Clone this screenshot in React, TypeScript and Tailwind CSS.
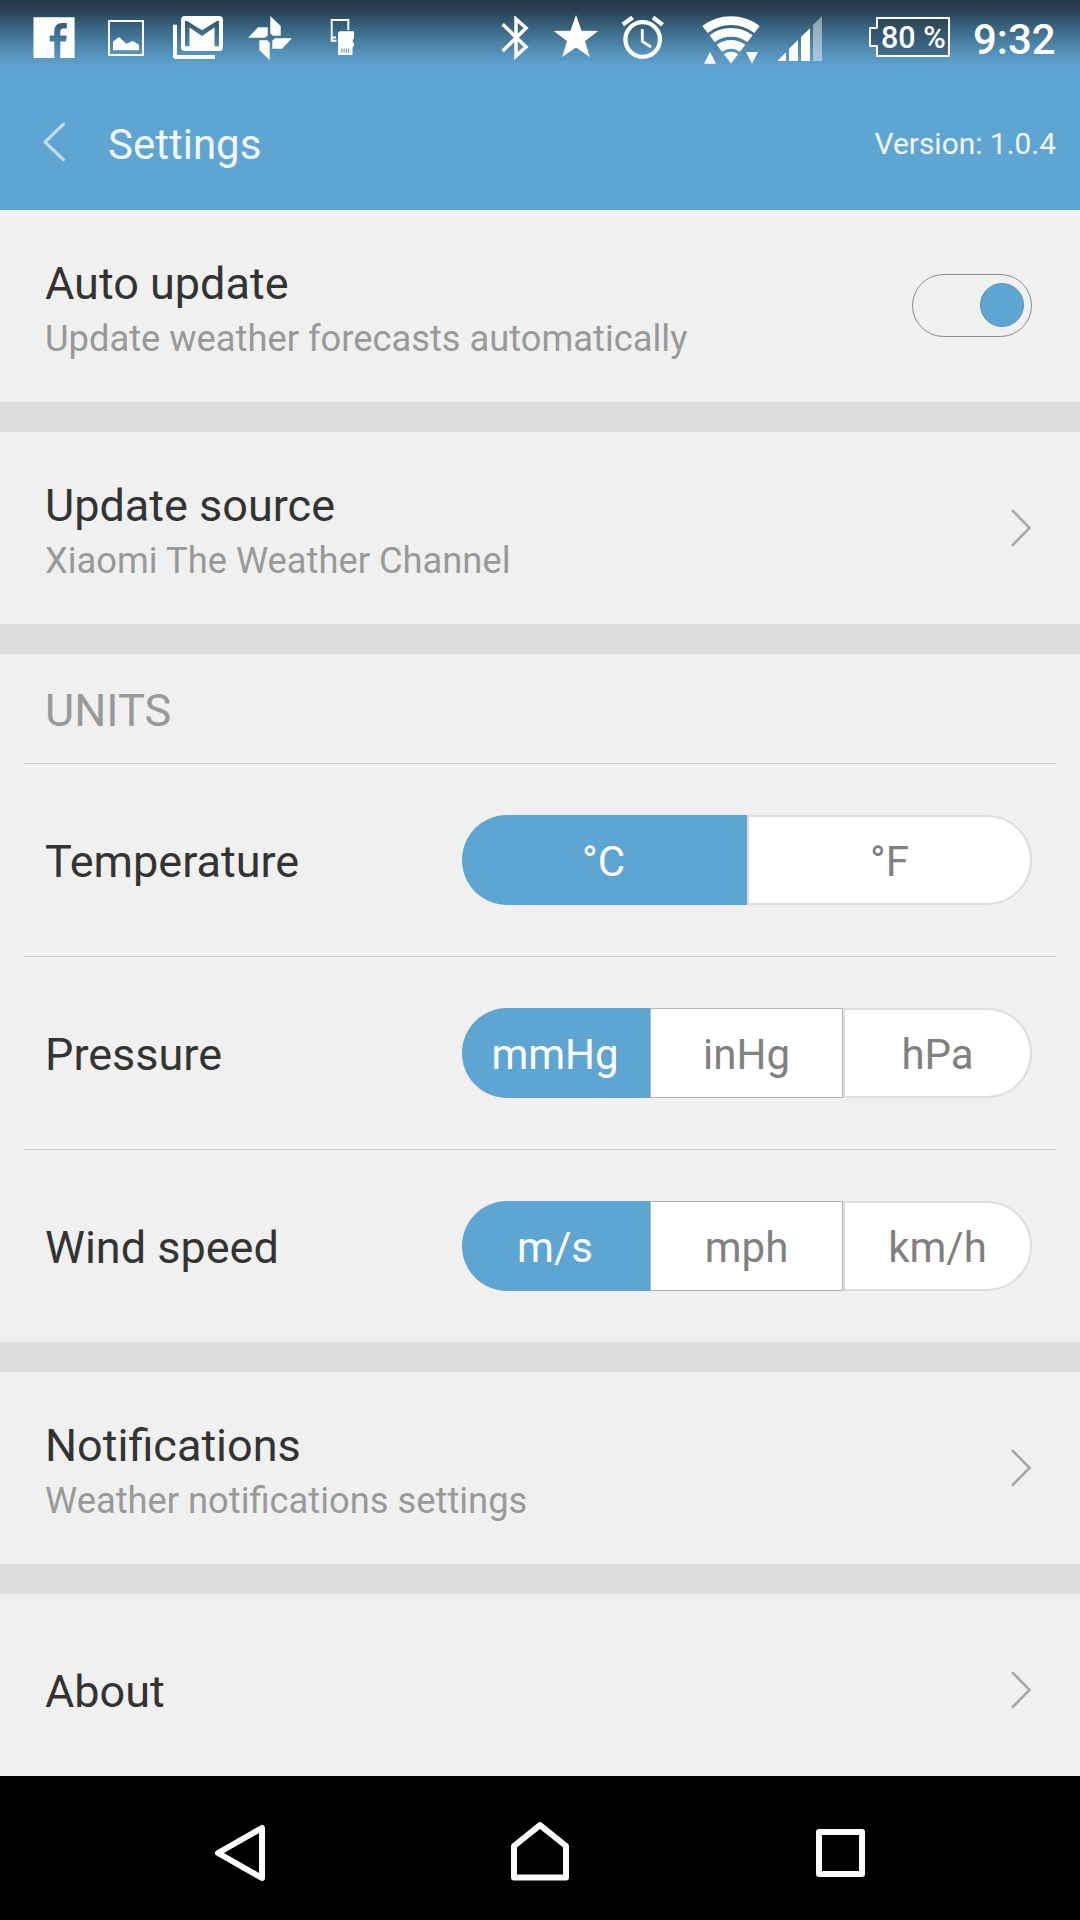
import { useState } from 'react';
import type { ReactNode } from 'react';

interface SegmentedControlProps {
  options: string[];
  value: string;
  onChange: (value: string) => void;
}

interface SettingRowProps {
  title: string;
  subtitle?: string;
  children?: ReactNode;
}

const PETAL = 'M270.3 16L280.7 26V35.7H272.8L270.3 33.2Z';

function ChevronRight() {
  return (
    <svg className="mr-px mb-px h-[38px] w-5" viewBox="0 0 20 38" fill="none" stroke="#a6a6a6" strokeWidth="2.6" strokeLinecap="round">
      <path d="M1.8 1.9 18.6 18.9 1.8 35.9" />
    </svg>
  );
}

function StatusBar() {
  return (
    <div className="flex h-[75px] bg-[linear-gradient(#253a49_0px,#294354_10px,#335a73_22px,#447899_38px,#5592bb_53px,#5da1ce_65px,#5fa5d2_75px)] pl-[33px] text-white">
      <svg className="mt-[17px] h-[42px] w-[42px]" viewBox="33 17 42 42" fill="currentColor">
        <path fillRule="evenodd" d="M33.5 17.3H74.6V58H60.3V41.6H66L66.8 35.6H60.3V31.5Q60.3 28.6 63.3 28.6H66.8V22.9H62.3Q54.3 23.2 54.3 31V35.6H49.7V41.6H54.3V58H33.5Z" />
      </svg>
      <svg className="mt-5 ml-[33px] h-9 w-9" viewBox="108 20 36 36" fill="currentColor">
        <rect x="109" y="21" width="34" height="34" fill="none" stroke="currentColor" strokeWidth="2" />
        <path d="M113 50.3V41.7L119 37L126.3 43.8L133 41L139 45V50.3Z" />
      </svg>
      <svg className="mt-4 ml-[29px] h-[43px] w-[50px]" viewBox="173 16 50 43" fill="currentColor">
        <path d="M173 24.7H177V55H215V59H175.5Q173 59 173 56.5Z" />
        <path fillRule="evenodd" d="M185 16H219Q223 16 223 20V47Q223 51 219 51H185Q181 51 181 47V20Q181 16 185 16ZM185 21V46.3H189.5V27.5L202 36L214.5 27.5V46.3H219V21H217L202 30.3L187 21Z" />
      </svg>
      <svg className="mt-4 ml-[25px] h-11 w-11" viewBox="248 16 44 44" fill="currentColor">
        <path d={PETAL} />
        <path d={PETAL} transform="rotate(90 270 38)" />
        <path d={PETAL} transform="rotate(180 270 38)" />
        <path d={PETAL} transform="rotate(270 270 38)" />
      </svg>
      <svg className="mt-[19px] ml-[38px] h-9 w-6" viewBox="330 19 24 36" fill="currentColor">
        <path d="M336.5 40.8H331.7V20H348.3V30M331 37.5H336" fill="none" stroke="currentColor" strokeWidth="1.9" />
        <path d="M339.5 31.3H354V38.5L352.8 40V42L354 43.5V46L352.5 47.5V55H338V33Z" />
        <path d="M341.8 48.5V52.8M344.1 48.5V52.8M346.4 48.5V52.8M348.7 48.5V52.8" stroke="#5089ae" />
      </svg>

      <svg className="mt-4 ml-[147px] h-11 w-7" viewBox="501 16 28 44" fill="none" stroke="currentColor" strokeWidth="3.5">
        <path d="M502.7 24.3L526 47L516 56V19L526 28L502.7 51" />
      </svg>
      <svg className="mt-[15px] ml-6 h-[43px] w-[46px]" viewBox="553 15 46 43" fill="currentColor">
        <path d="M576 15L581.5 30.8L598.3 31L585 41L589.8 57L576 47.4L562.2 57L567 41L553.7 31L570.5 30.8Z" />
      </svg>
      <svg className="mt-4 ml-[22px] h-11 w-11" viewBox="621 16 44 44" fill="none" stroke="currentColor">
        <circle cx="642.7" cy="39.5" r="17.3" strokeWidth="4.2" />
        <path d="M642.3 29V41.3L651 47" strokeWidth="2.8" />
        <path d="M622.8 24.5L632.6 17.5M653 17.5L662.6 24.8" strokeWidth="4.4" />
      </svg>
      <svg className="mt-4 ml-[37px] h-12 w-[58px]" viewBox="702 16 58 48" fill="none" stroke="currentColor" strokeWidth="8.8">
        <path d="M705 29.4A42.9 42.9 0 0 1 757 29.4" />
        <path d="M712.1 38.8A31.1 31.1 0 0 1 749.9 38.8" />
        <path d="M719.4 48.3A19.1 19.1 0 0 1 742.6 48.3" />
        <path d="M723.9 54.2A11.7 11.7 0 0 1 738.1 54.2L731 63.5Z" fill="currentColor" stroke="none" />
        <path d="M704 63.8H716L710 52ZM746 52H758L752 63.8Z" fill="currentColor" stroke="none" />
      </svg>
      <svg className="mt-4 ml-[17px] h-[45px] w-[45px]" viewBox="777 16 45 45" fill="currentColor">
        <path d="M777.3 61L786 52.3V61ZM789 61V48.7L798 40V61ZM801 61V37L810 28.3V61Z" />
        <path d="M813 61V25L822 16V61Z" opacity="0.45" />
      </svg>
      <div className="relative mt-[17px] ml-[47px] h-10 w-[81px]">
        <svg className="h-10 w-[81px]" viewBox="0 0 81 40" fill="none">
          <defs>
            <linearGradient id="charge" x1="0" y1="0" x2="0" y2="1">
              <stop offset="0" stopColor="#2a4454" />
              <stop offset="1" stopColor="#416f8e" />
            </linearGradient>
          </defs>
          <path d="M8 1H80V39H8V29H1V11H8Z" fill="url(#charge)" stroke="#fff" strokeWidth="2" strokeLinejoin="round" />
        </svg>
        <span className="absolute top-px left-[12px] text-[30.5px] leading-[40px] font-medium whitespace-nowrap">80 %</span>
      </div>
      <span className="ml-[23px] pt-[14px] text-[42px] leading-[52px] font-medium">9:32</span>
    </div>
  );
}

function Header() {
  return (
    <header className="flex h-[135px] justify-between bg-[#5fa5d2] pr-6 pl-[43px] text-[#f0f6fc]">
      <div className="flex">
        <svg className="mt-[47px] h-10 w-[22px]" viewBox="0 0 22 40" fill="none" stroke="#bfdbee" strokeWidth="3.2" strokeLinecap="round" strokeLinejoin="round">
          <path d="M20.3 2.3 2 20 20.3 37.7" />
        </svg>
        <h1 className="mt-11 ml-[43px] text-[42px] leading-[52px]">Settings</h1>
      </div>
      <span className="mt-[49px] text-[29.9px] leading-[40px]">Version: 1.0.4</span>
    </header>
  );
}

function SettingRow({ title, subtitle, children }: SettingRowProps) {
  return (
    <div className="flex h-48 shrink-0 items-center justify-between pr-12 pl-[45px]">
      <div className={subtitle ? 'pt-[7px]' : 'pt-1'}>
        <p className="text-[45px] leading-[52px] text-[#333]">{title}</p>
        {subtitle && <p className="mt-[7px] text-[36.3px] leading-[44px] text-[#999]">{subtitle}</p>}
      </div>
      {children}
    </div>
  );
}

function Toggle({ checked, onChange }: { checked: boolean; onChange: (checked: boolean) => void }) {
  return (
    <button
      role="switch"
      aria-checked={checked}
      onClick={() => onChange(!checked)}
      className={`mb-[2px] flex h-[63px] w-[120px] items-center rounded-full border border-[#8a8a8a] px-[7px] ${checked ? 'justify-end' : 'justify-start'}`}
    >
      <span className={`h-11 w-11 rounded-full border ${checked ? 'border-[#5592b9] bg-[#5fa5d2]' : 'border-[#999] bg-[#bbb]'}`} />
    </button>
  );
}

function SegmentedControl({ options, value, onChange }: SegmentedControlProps) {
  const columns = options.length === 2 ? 'grid-cols-[285px_285px]' : 'grid-cols-[188px_193px_189px]';

  return (
    <div className={`grid h-[90px] w-[570px] ${columns}`}>
      {options.map((option, index) => {
        const first = index === 0;
        const last = index === options.length - 1;
        const shape = first ? 'rounded-l-[45px] pr-[2px]' : last ? 'rounded-r-[45px]' : '';
        const border = first || last ? 'border-2 border-[#dddddd]' : 'border border-[#b4b4b4]';
        const color = option === value ? 'bg-[#5fa5d2] text-white' : `bg-white text-[#808080] ${border}`;
        return (
          <button
            key={option}
            onClick={() => onChange(option)}
            className={`flex items-center justify-center pt-[3px] text-[42px] ${shape} ${color}`}
          >
            {option}
          </button>
        );
      })}
    </div>
  );
}

function Divider() {
  return <div className="mx-6 h-px bg-[#cfcfcf]" />;
}

function Gap() {
  return <div className="h-[30px] bg-[#dddddd]" />;
}

function NavigationBar() {
  return (
    <nav className="flex h-36 bg-black pl-[214px]">
      <svg className="mt-[48px] h-[58px] w-[51px]" viewBox="-1 0 51 58" fill="none" stroke="#fff" strokeWidth="6" strokeLinejoin="round">
        <path d="M47 4V54L3 29Z" />
      </svg>
      <svg className="mt-[45px] ml-[246px] h-[60px] w-[58px]" viewBox="0 0 58 60" fill="none" stroke="#fff" strokeWidth="6" strokeLinejoin="round">
        <path d="M3 56.5V25L29 4.2L55 25V56.5Z" />
      </svg>
      <svg className="mt-[53px] ml-[247px] h-12 w-[49px]" viewBox="0 0 49 48" fill="none" stroke="#fff" strokeWidth="6" strokeLinejoin="round">
        <path d="M3 3H46V45H3Z" />
      </svg>
    </nav>
  );
}

export default function App() {
  const [autoUpdate, setAutoUpdate] = useState(true);
  const [temperature, setTemperature] = useState('°C');
  const [pressure, setPressure] = useState('mmHg');
  const [windSpeed, setWindSpeed] = useState('m/s');

  return (
    <div className="h-[1920px] w-[1080px] overflow-hidden bg-[#f0f0f0] font-['Roboto',sans-serif]">
      <StatusBar />
      <Header />

      <main className="h-[1566px] overflow-hidden">
        <SettingRow title="Auto update" subtitle="Update weather forecasts automatically">
          <Toggle checked={autoUpdate} onChange={setAutoUpdate} />
        </SettingRow>
        <Gap />
        <SettingRow title="Update source" subtitle="Xiaomi The Weather Channel">
          <ChevronRight />
        </SettingRow>
        <Gap />

        {/* Units */}
        <h2 className="h-[109px] pt-[31px] pl-[45px] text-[45px] leading-[52px] text-[#999]">UNITS</h2>
        <Divider />
        <SettingRow title="Temperature">
          <SegmentedControl options={['°C', '°F']} value={temperature} onChange={setTemperature} />
        </SettingRow>
        <Divider />
        <SettingRow title="Pressure">
          <SegmentedControl options={['mmHg', 'inHg', 'hPa']} value={pressure} onChange={setPressure} />
        </SettingRow>
        <Divider />
        <SettingRow title="Wind speed">
          <SegmentedControl options={['m/s', 'mph', 'km/h']} value={windSpeed} onChange={setWindSpeed} />
        </SettingRow>
        <Gap />

        <SettingRow title="Notifications" subtitle="Weather notifications settings">
          <ChevronRight />
        </SettingRow>
        <Gap />
        <SettingRow title="About">
          <ChevronRight />
        </SettingRow>
      </main>

      <NavigationBar />
    </div>
  );
}
